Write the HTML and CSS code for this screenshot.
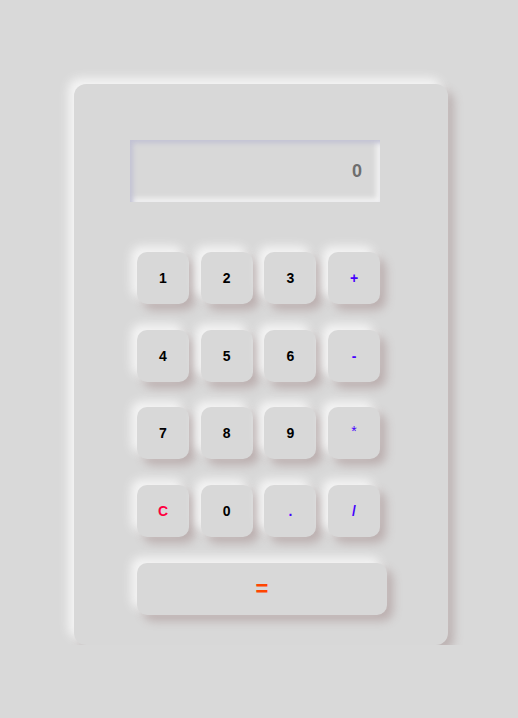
FILE: index.html
```html
<!DOCTYPE html>
<html>
<head>
<meta charset="utf-8">
<link rel="stylesheet" href="styles.css">
</head>
<body>
<div class="calc">
  <div class="display">0</div>
  <div class="keys">
    <button class="key">1</button>
    <button class="key">2</button>
    <button class="key">3</button>
    <button class="key op">+</button>
    <button class="key">4</button>
    <button class="key">5</button>
    <button class="key">6</button>
    <button class="key op">-</button>
    <button class="key">7</button>
    <button class="key">8</button>
    <button class="key">9</button>
    <button class="key op star">*</button>
    <button class="key clear">C</button>
    <button class="key">0</button>
    <button class="key op">.</button>
    <button class="key op">/</button>
    <button class="key equals">=</button>
  </div>
</div>
</body>
</html>
```
FILE: styles.css
```css
html, body {
  margin: 0;
  background: #d9d9d9;
}
body {
  padding: 84px 0 0 74px;
  font-family: "Liberation Sans", Arial, sans-serif;
}
.calc {
  box-sizing: border-box;
  width: 374px;
  height: 561px;
  background: #d8d8d8;
  border-radius: 12px;
  padding: 56px 0 0 56px;
  box-shadow: -6px -6px 10px #f4f4f4, 6px 6px 10px #bdb3b3;
  display: flex;
  flex-direction: column;
  align-items: flex-start;
}
.display {
  box-sizing: border-box;
  width: 250px;
  height: 62px;
  padding-right: 18px;
  display: flex;
  align-items: center;
  justify-content: flex-end;
  font-size: 18px;
  font-weight: bold;
  color: #6e6e6e;
  background: #d8d8d8;
  box-shadow: inset 3px 3px 5px #c2c2d4, inset -4px -4px 5px #f2f2f2;
}
.keys {
  margin: 50px 0 0 7px;
  display: grid;
  grid-template-columns: repeat(4, 52px);
  grid-auto-rows: 52px;
  column-gap: 11.7px;
  row-gap: 25.7px;
}
.key {
  border: none;
  margin: 0;
  padding: 0;
  background: #d8d8d8;
  border-radius: 10px;
  font-family: "Liberation Sans", Arial, sans-serif;
  font-size: 14px;
  font-weight: bold;
  color: #000;
  box-shadow: -6px -6px 10px #f4f4f4, 6px 6px 10px #bcb0b0;
}
.op {
  color: #4400ff;
}
.star {
  font-weight: normal;
  padding-bottom: 4px;
}
.clear {
  color: #ff0040;
}
.equals {
  grid-column: 1 / span 4;
  width: 250px;
  font-size: 22px;
  color: #ff4500;
}
```
